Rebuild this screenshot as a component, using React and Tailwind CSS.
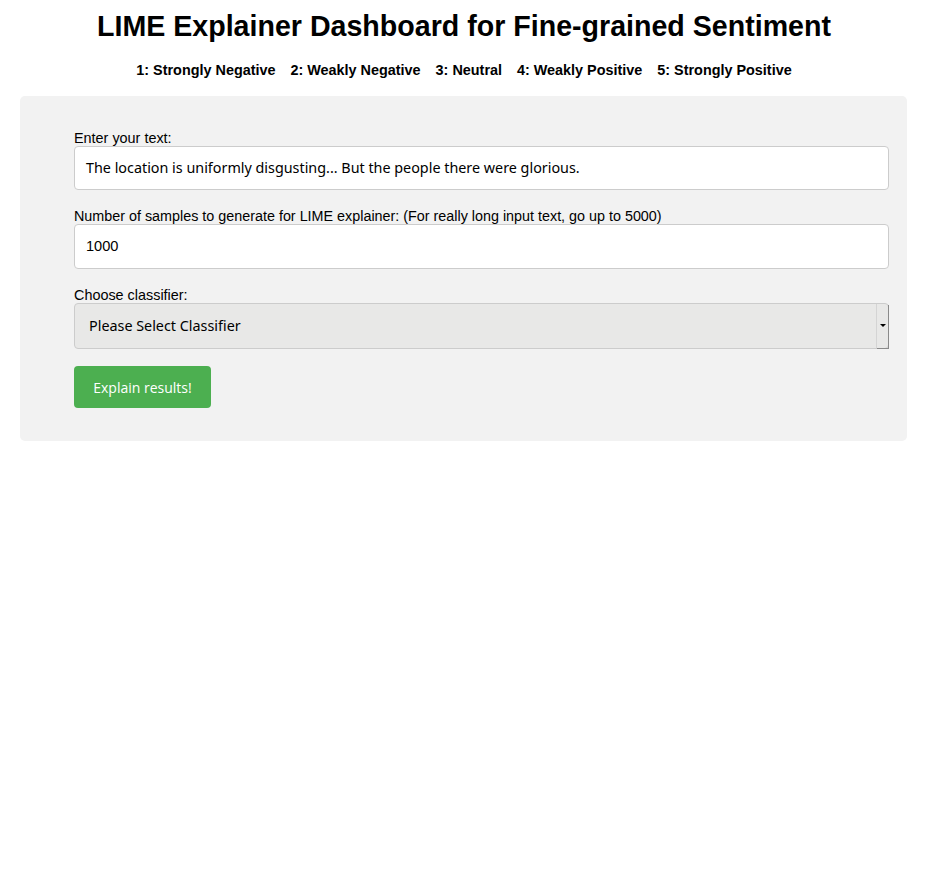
export default function App() {
  return (
    <div className="min-h-[894px] bg-white text-black font-['Liberation_Sans',Arial,sans-serif]">
      <h1 className="pt-[10px] text-center text-[28.6px] font-bold leading-[33px]">
        LIME Explainer Dashboard for Fine-grained Sentiment
      </h1>
      <div className="mt-[18px] flex justify-center gap-[15px] text-[14.4px] font-bold leading-[18px]">
        <span>1: Strongly Negative</span>
        <span>2: Weakly Negative</span>
        <span>3: Neutral</span>
        <span>4: Weakly Positive</span>
        <span>5: Strongly Positive</span>
      </div>

      <div className="mx-[20px] mt-[17px] w-[887px] rounded-[5px] bg-[#f2f2f2] pt-[32px] pb-[33px] pl-[54px] pr-[18px]">
        <label className="block pt-[2px] text-[14.4px] leading-[16px]">Enter your text:</label>
        <div className="flex h-[44px] items-center rounded-[4px] border border-[#cccccc] bg-white px-[11px] font-['Noto_Sans',sans-serif] text-[14.35px]">
          The location is uniformly disgusting... But the people there were glorious.
        </div>

        <label className="mt-[16px] block pt-[2px] text-[14.35px] leading-[16px]">
          Number of samples to generate for LIME explainer: (For really long input text, go up to 5000)
        </label>
        <div className="flex h-[45px] items-center rounded-[4px] border border-[#cccccc] bg-white px-[11px] text-[14.6px]">
          1000
        </div>

        <label className="mt-[16px] block pt-[2px] text-[14.4px] leading-[16px]">Choose classifier:</label>
        <div className="flex h-[46px] items-stretch rounded-[4px] border border-[#cccccc] bg-[#e8e8e7] font-['Noto_Sans',sans-serif] text-[14.35px]">
          <div className="flex flex-1 items-center pl-[14px]">Please Select Classifier</div>
          <div className="flex w-[12px] items-center justify-center border-l border-[#d4d4d4] shadow-[1px_1px_0_#8a8a8a]">
            <svg width="6" height="4" viewBox="0 0 6 4">
              <path d="M0 0 L6 0 L3 3 Z" fill="#000" />
            </svg>
          </div>
        </div>

        <button className="mt-[17px] h-[42px] w-[137px] rounded-[4px] bg-[#4caf50] font-['Open_Sans',sans-serif] text-[14px] text-white">
          Explain results!
        </button>
      </div>
    </div>
  );
}
